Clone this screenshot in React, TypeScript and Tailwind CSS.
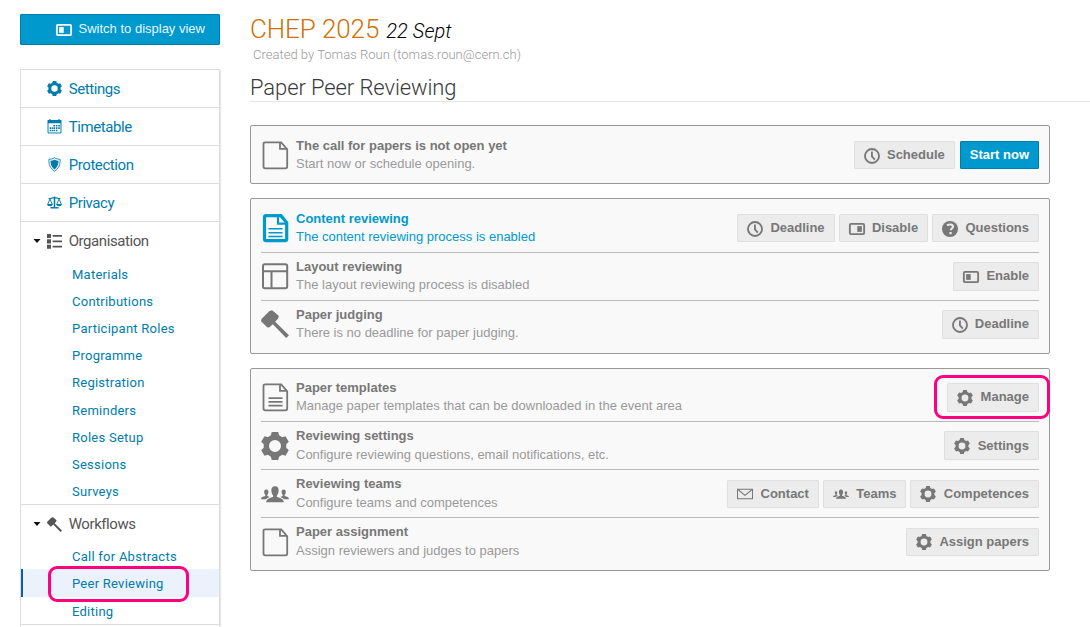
import React from 'react';

type IconName =
  | 'gear' | 'calendar' | 'shield' | 'scales' | 'list' | 'hammer' | 'switchOff' | 'switchOn'
  | 'clock' | 'question' | 'mail' | 'users' | 'file' | 'fileText' | 'fileBold' | 'layout';

function gearPath() {
  const points: string[] = [];
  const at = (deg: number, r: number) => {
    const a = (deg * Math.PI) / 180;
    points.push(`${(14 + r * Math.cos(a)).toFixed(2)} ${(14 + r * Math.sin(a)).toFixed(2)}`);
  };
  for (let i = 0; i < 6; i++) {
    const c = i * 60 - 90;
    at(c - 21, 11.4);
    at(c - 13, 14.4);
    at(c + 13, 14.4);
    at(c + 21, 11.4);
  }
  return `M${points.join('L')}Z M14 8a6 6 0 1 0 0 12a6 6 0 1 0 0-12Z`;
}

const GEAR = gearPath();

const shapes: Record<IconName, React.ReactNode> = {
  gear: <path fillRule="evenodd" d={GEAR} />,
  calendar: (
    <>
      <path d="M1 2h3v-1.600h3v1.600h14v-1.600h3v1.600h3v6h-26z" />
      <path d="M1.900 7v19.100h24.200v-19.100" fill="none" stroke="currentColor" strokeWidth="1.800" />
      <path d="M12 11h3v3h-3zM16.500 11h3v3h-3zM21 11h3v3h-3zM5 15.500h2.500v3h-2.500zM8.500 15.500h2.500v3h-2.500zM12 15.500h3v3h-3zM16.500 15.500h3v3h-3zM21 15.500h3v3h-3zM5 20h2.500v3h-2.500zM8.500 20h2.500v3h-2.500zM12 20h3v3h-3zM16.500 20h3v3h-3z" />
    </>
  ),
  shield: (
    <>
      <path d="M14 1.500c3.500 2.200 7 2.700 10.500 2.700c0 10-1.500 16.500-10.500 22.300c-9-5.800-10.500-12.300-10.500-22.300c3.500 0 7-.5 10.500-2.700z" fill="none" stroke="currentColor" strokeWidth="1.600" />
      <path d="M14 5c2.600 1.500 5 2 7.500 2.200c-.3 7-1.500 11.800-7.500 16c-6-4.200-7.200-9-7.500-16c2.500-.2 4.900-.7 7.500-2.200z" />
    </>
  ),
  scales: (
    <>
      <path d="M12.600 3h2.800v20h-2.800zM3 5.500c5 0 7-2 11-2s6 2 11 2v2c-5 0-7-1.500-11-1.500s-6 1.500-11 1.500zM6.500 22.500h15v2.500h-15zM0 17h11c-.6 5.500-10.400 5.500-11 0zM17 17h11c-.6 5.500-10.400 5.500-11 0z" />
      <path d="M1.300 17.500l4.200-10l4.200 10M18.300 17.500l4.200-10l4.200 10" fill="none" stroke="currentColor" strokeWidth="1.700" />
    </>
  ),
  list: <path d="M0 0h7.500v7.500h-7.500zM0 10h7.500v7.500h-7.500zM0 20h7.500v7.500h-7.500zM10.500 2h17.500v3.300h-17.500zM10.500 12h17.500v3.300h-17.500zM10.500 22h17.500v3.300h-17.500z" />,
  hammer: <path d="M11 .3l2 1.400L17.800 6l-.5 2.300-3.100 3.500L28 25.200 25.200 28 11.800 14.200 8.500 17.200 6.500 17.600 0 11.300l.5-2.300L8.500 1z" />,
  switchOff: (
    <>
      <rect x="1.500" y="5" width="25" height="18" rx="2" fill="none" stroke="currentColor" strokeWidth="3.200" />
      <path d="M5.500 9h8v10h-8z" />
    </>
  ),
  switchOn: (
    <>
      <rect x="1.500" y="5" width="25" height="18" rx="2" fill="none" stroke="currentColor" strokeWidth="3.200" />
      <path d="M14.500 9h8v10h-8z" />
    </>
  ),
  clock: (
    <>
      <circle cx="14" cy="14" r="12.300" fill="none" stroke="currentColor" strokeWidth="3.200" />
      <path d="M12.300 6h3.200v8l4.500 5.300-2.300 2.200-5.400-6.300z" />
    </>
  ),
  question: (
    <>
      <circle cx="14" cy="14" r="14" />
      <path d="M8.800 7.800q3-2 6-1.800q4.500.4 4.500 4c0 3-4 3.500-4 6.400" fill="none" stroke="#ececec" strokeWidth="3.600" />
      <path d="M13 19.200h4v4h-4z" fill="#ececec" />
    </>
  ),
  mail: (
    <path d="M.9 5.500h26.200v17h-26.200zM2.500 7l11.500 9.500 11.500-9.500" fill="none" stroke="currentColor" strokeWidth="1.800" />
  ),
  users: (
    <>
      <path d="M14 6.200c2.800 0 3.900 2 3.600 5-.2 2-.9 3.300-1.700 4.200v1.600c3.400 1 6.600 1.800 6.900 5.200h-17.600c.3-3.400 3.500-4.200 6.900-5.200v-1.600c-.8-.9-1.500-2.200-1.700-4.200-.3-3 .8-5 3.600-5z" />
      <path d="M5.300 9.400c1.700 0 2.300 1.300 2.100 3-.1 1.100-.5 1.900-1.100 2.400v1.300l2.500.9c-1.700.6-2.900 1.300-3.600 2.200h-5.200c.1-2 1.900-2.400 4.300-3.100v-1.300c-.6-.5-1-1.300-1.100-2.400-.2-1.700.4-3 2.100-3zM22.700 9.400c-1.700 0-2.300 1.300-2.100 3 .1 1.100.5 1.900 1.100 2.400v1.300l-2.500.9c1.700.6 2.900 1.300 3.600 2.200h5.200c-.1-2-1.900-2.400-4.300-3.100v-1.300c.6-.5 1-1.300 1.100-2.400.2-1.700-.4-3-2.100-3z" />
    </>
  ),
  file: (
    <path d="M19 1.300h-14.800q-1.700 0-1.700 1.700v22.600q0 1.700 1.700 1.700h20.300q1.700 0 1.700-1.700v-17.300l-6-7h-1.200M19 1.300v6.600h7" fill="none" stroke="currentColor" strokeWidth="1.800" />
  ),
  fileText: (
    <>
      <path d="M19 1.300h-14.800q-1.700 0-1.700 1.700v22.600q0 1.700 1.700 1.700h20.300q1.700 0 1.700-1.700v-17.300l-6-7h-1.200M19 1.300v6.600h7" fill="none" stroke="currentColor" strokeWidth="1.800" />
      <path d="M7.500 14.300h14v1.700h-14zM7.500 18h14v1.700h-14zM7.500 21.700h14v1.700h-14z" />
    </>
  ),
  fileBold: (
    <>
      <path d="M18 1.700h-12.800q-1.700 0-1.700 1.700v21.600q0 1.700 1.700 1.700h18.800q1.700 0 1.700-1.700v-16.300l-5.700-7z" fill="none" stroke="currentColor" strokeWidth="3.200" />
      <path d="M17 2v7.700h8.500" fill="none" stroke="currentColor" strokeWidth="2.200" />
      <path d="M7.500 14.100h14v1.500h-14zM7.500 17.900h14v1.500h-14zM7.500 21.700h14v1.500h-14z" />
    </>
  ),
  layout: (
    <>
      <rect x="2" y="2.300" width="24.200" height="24" rx="1.800" fill="none" stroke="currentColor" strokeWidth="2" />
      <path d="M2 9.300h24M10.500 9.300v16.500" fill="none" stroke="currentColor" strokeWidth="2" />
    </>
  ),
};

function Icon({ name, className }: { name: IconName; className: string }) {
  return (
    <svg viewBox="0 0 28 28" fill="currentColor" overflow="visible" className={`shrink-0 ${className}`} aria-hidden="true">
      {shapes[name]}
    </svg>
  );
}

function Button({ icon, children, primary, highlighted }: { icon?: IconName; children: string; primary?: boolean; highlighted?: boolean }) {
  return (
    <button
      className={`relative flex h-[28.4px] items-center rounded-[1px] border px-[9px] text-[13px] leading-4 font-bold whitespace-nowrap ${
        primary ? 'ml-px border-[#007cac] bg-[#0099cd] text-white' : 'border-[#dfdfdf] bg-[#ececec] text-[#777]'
      }`}
    >
      {icon && <Icon name={icon} className="mt-px mr-[7.3px] size-4" />}
      {children}
      {highlighted && <span className="absolute -top-[9px] -right-[12px] h-[44px] w-[116px] rounded-[9px] border-3 border-[#ff0080]" />}
    </button>
  );
}

type Action = { icon?: IconName; label: string; primary?: boolean; highlighted?: boolean };
type Row = { icon: IconName; title: string; text: string; active?: boolean; actions: Action[] };

const groups: { rows: Row[]; padding: string }[] = [
  {
    padding: 'pt-[5.5px] pb-[4.33px]',
    rows: [
      {
        icon: 'file', title: 'The call for papers is not open yet', text: 'Start now or schedule opening.',
        actions: [{ icon: 'clock', label: 'Schedule' }, { label: 'Start now', primary: true }],
      },
    ],
  },
  {
    padding: 'pt-[5.6px] pb-[5px]',
    rows: [
      {
        icon: 'fileBold', title: 'Content reviewing', text: 'The content reviewing process is enabled', active: true,
        actions: [{ icon: 'clock', label: 'Deadline' }, { icon: 'switchOn', label: 'Disable' }, { icon: 'question', label: 'Questions' }],
      },
      {
        icon: 'layout', title: 'Layout reviewing', text: 'The layout reviewing process is disabled',
        actions: [{ icon: 'switchOff', label: 'Enable' }],
      },
      {
        icon: 'hammer', title: 'Paper judging', text: 'There is no deadline for paper judging.',
        actions: [{ icon: 'clock', label: 'Deadline' }],
      },
    ],
  },
  {
    padding: 'pt-[4.83px] pb-[4.4px]',
    rows: [
      {
        icon: 'fileText', title: 'Paper templates', text: 'Manage paper templates that can be downloaded in the event area',
        actions: [{ icon: 'gear', label: 'Manage', highlighted: true }],
      },
      {
        icon: 'gear', title: 'Reviewing settings', text: 'Configure reviewing questions, email notifications, etc.',
        actions: [{ icon: 'gear', label: 'Settings' }],
      },
      {
        icon: 'users', title: 'Reviewing teams', text: 'Configure teams and competences',
        actions: [{ icon: 'mail', label: 'Contact' }, { icon: 'users', label: 'Teams' }, { icon: 'gear', label: 'Competences' }],
      },
      {
        icon: 'file', title: 'Paper assignment', text: 'Assign reviewers and judges to papers',
        actions: [{ icon: 'gear', label: 'Assign papers' }],
      },
    ],
  },
];

function ReviewRow({ row }: { row: Row }) {
  return (
    <div className="flex h-[48.17px] items-center border-b border-[#bbb] last:h-[47.17px] last:border-b-0">
      <Icon name={row.icon} className={`size-7 ${row.active ? 'text-[#0099cd]' : 'text-[#777]'}`} />
      <div className="ml-[7px] grow text-[13px] leading-[18.5px]">
        <div className={`font-bold ${row.active ? 'text-[#0099cd]' : 'text-[#777]'}`}>{row.title}</div>
        <div className={row.active ? 'text-[#0099cd]' : 'text-[#999]'}>{row.text}</div>
      </div>
      <div className="flex gap-1">
        {row.actions.map((a) => (
          <Button key={a.label} icon={a.icon} primary={a.primary} highlighted={a.highlighted}>{a.label}</Button>
        ))}
      </div>
    </div>
  );
}

const mainItems: { icon: IconName; label: string }[] = [
  { icon: 'gear', label: 'Settings' },
  { icon: 'calendar', label: 'Timetable' },
  { icon: 'shield', label: 'Protection' },
  { icon: 'scales', label: 'Privacy' },
];

function SectionHeader({ icon, label, height }: { icon: IconName; label: string; height: string }) {
  return (
    <div className={`flex items-center pl-3 text-[#555] ${height}`}>
      <svg viewBox="0 0 8 4" className="mr-[5px] h-1 w-2"><path d="M.5 0h7L4 4z" fill="#111" /></svg>
      <Icon name={icon} className="ml-px size-[15px]" />
      <span className="ml-[6.7px] text-[15px] tracking-[-0.42px]">{label}</span>
    </div>
  );
}

function SubItem({ label, selected, height = 'h-[27.15px]' }: { label: string; selected?: boolean; height?: string }) {
  return (
    <a
      className={`relative flex items-center pt-[2px] text-[13px] tracking-[0.25px] text-[#007cac] ${height} ${
        selected ? 'border-l-2 border-[#0b63a5] bg-[#ebf2fc] pl-[49px]' : 'pl-[51px]'
      }`}
    >
      {label}
      {selected && <span className="absolute -top-[3px] left-[25px] h-[36px] w-[141px] rounded-[9px] border-3 border-[#ff0080]" />}
    </a>
  );
}

export default function App() {
  return (
    <div className="flex h-[627px] w-[1090px] overflow-hidden bg-white font-['Liberation_Sans',Arial,sans-serif]">
      <aside className="ml-5 w-[200px] shrink-0 pt-[14px]">
        <button className="flex h-[31px] w-full items-center justify-end rounded-[1px] border border-[#007cac] bg-[#0099cd] pr-[14px] text-[13px] text-[#e8f6fb]">
          <Icon name="switchOff" className="mr-[7px] size-4 text-white" />
          <span className="pb-0.5">Switch to display view</span>
        </button>
        <nav className="mt-6 h-[580px] border border-[#ddd] font-['Roboto',sans-serif] shadow-[1px_1px_1px_#e8e8e8]">
          {mainItems.map((item) => (
            <a key={item.label} className="flex h-[38px] items-center border-b border-[#ddd] pl-[26px] text-[15px] tracking-[-0.42px] text-[#007cac]">
              <Icon name={item.icon} className="size-[15px]" />
              <span className="ml-[6.7px] pt-0.5">{item.label}</span>
            </a>
          ))}
          <div className="border-b border-[#ddd]">
            <SectionHeader icon="list" label="Organisation" height="h-[38px]" />
            {['Materials', 'Contributions', 'Participant Roles', 'Programme', 'Registration', 'Reminders', 'Roles Setup', 'Sessions', 'Surveys'].map((s) => (
              <SubItem key={s} label={s} />
            ))}
          </div>
          <div className="border-b border-[#ddd]">
            <SectionHeader icon="hammer" label="Workflows" height="h-[36.8px] pt-px" />
            <SubItem label="Call for Abstracts" height="h-[27.3px]" />
            <SubItem label="Peer Reviewing" height="h-[27.3px]" selected />
            <SubItem label="Editing" height="h-[27.3px]" />
          </div>
        </nav>
      </aside>

      <main className="ml-[30px] flex grow flex-col font-['Roboto',sans-serif]">
        <h1 className="mt-[13px] flex h-8 items-baseline text-[26px] leading-8 font-light tracking-[-0.1px] text-[#d07000]">
          CHEP 2025
          <span className="ml-[7px] text-[20px] tracking-[0.08px] text-black italic">22 Sept</span>
        </h1>
        <p className="mt-px ml-[3px] text-[13px] leading-[18px] font-light tracking-[0.02px] text-[#999]">Created by Tomas Roun (tomas.roun@cern.ch)</p>
        <h2 className="mt-2.5 h-7 border-b border-[#e5e5e5] text-[22px] leading-7 font-light tracking-[-0.1px] text-[#3a3a3a]">Paper Peer Reviewing</h2>
        <div className="mt-[23px] flex w-[800px] flex-col gap-[14px] font-['Liberation_Sans',Arial,sans-serif]">
          {groups.map((g, i) => (
            <section key={i} className={`rounded-[2px] border border-[#999] bg-[#f9f9f9] px-2.5 ${g.padding}`}>
              {g.rows.map((row) => <ReviewRow key={row.title} row={row} />)}
            </section>
          ))}
        </div>
      </main>
    </div>
  );
}
